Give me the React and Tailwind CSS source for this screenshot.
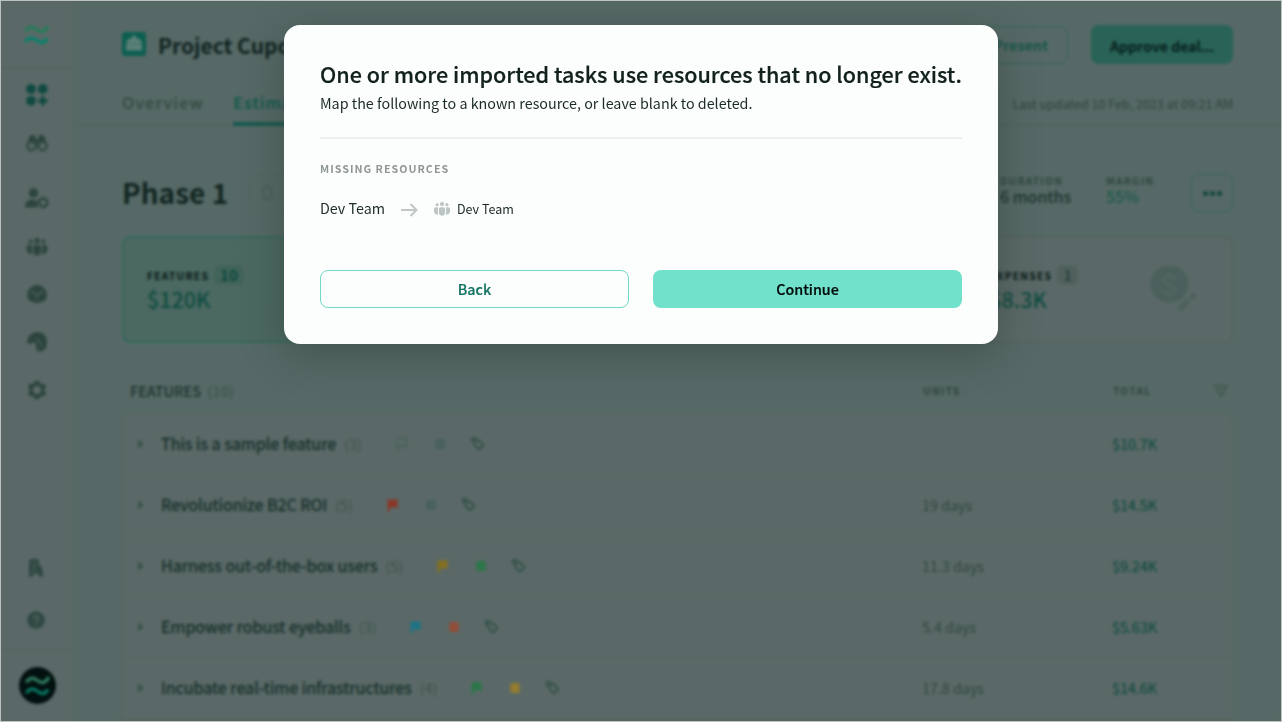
import React from "react";

const Wave = ({ className, top, bottom }) => (
  <svg viewBox="0 0 24 20" className={className} fill="none" strokeWidth="3.400" strokeLinecap="butt">
    <path d="M.8 6.200C4 1.400 8 1.200 12 4.500S20 7.600 23.400 1" stroke={top} />
    <path d="M.8 17C4 12.200 8 12 12 15.300S19.500 18.400 22.500 13.500" stroke={bottom} />
  </svg>
);

const GridIcon = () => (
  <svg viewBox="0 0 22 22" className="size-[22px]" fill="#104a43">
    <circle cx="5" cy="5" r="4.900" />
    <circle cx="16.800" cy="5" r="4.900" />
    <circle cx="5" cy="16.800" r="4.900" />
    <path d="M16.800 13.400v6.800M13.400 16.800h6.800" stroke="#104a43" strokeWidth="3.400" strokeLinecap="round" />
  </svg>
);

const Binoculars = () => (
  <svg viewBox="0 0 22 18" className="h-[18px] w-[22px]" fill="none" stroke="#2c443f" strokeWidth="2.200">
    <path d="M2.500 9L5 2h3l1.500 7zM19.500 9L17 2h-3l-1.500 7z" fill="#2c443f" />
    <circle cx="5.500" cy="12" r="4.300" fill="#566764" />
    <circle cx="16.500" cy="12" r="4.300" fill="#566764" />
    <path d="M8 6.500h6" strokeWidth="3" />
  </svg>
);

const UserTag = () => (
  <svg viewBox="0 0 24 20" className="h-[20px] w-[24px]" fill="#2c443f">
    <circle cx="8.500" cy="5" r="4.700" />
    <path d="M0 19.500c0-5 2.500-8 7-8 3 0 4.500.8 5.500 2v6z" />
    <circle cx="18.200" cy="14.600" r="4.200" fill="none" stroke="#2c443f" strokeWidth="2.600" />
  </svg>
);

const Team = ({ className, color }) => (
  <svg viewBox="0 0 16 14" className={className} fill={color}>
    <circle cx="8" cy="2.100" r="2.100" />
    <circle cx="3.100" cy="2.700" r="1.600" />
    <circle cx="12.900" cy="2.700" r="1.600" />
    <path d="M4.900 7.100c0-1.100.8-1.900 1.900-1.900h2.400c1.100 0 1.900.8 1.900 1.900V10c0 2-1.300 3.800-3.100 3.800S4.900 12 4.900 10z" />
    <path d="M3.900 5.200H1.800C.7 5.200 0 5.900 0 7v2.200c0 1.900 1.300 3.300 3.100 3.300.5 0 .9-.1 1.200-.3-.3-.7-.4-1.400-.4-2.200z" />
    <path d="M12.100 5.200h2.100c1.100 0 1.800.7 1.800 1.800v2.200c0 1.900-1.300 3.300-3.100 3.300-.5 0-.9-.1-1.200-.3.3-.7.4-1.400.4-2.200z" />
  </svg>
);

const Cube = () => (
  <svg viewBox="0 0 20 18" className="h-[18px] w-[20px]">
    <path d="M10 0a10 10 0 0 1 8.500 15Q14 18 10 18T1.500 15A10 10 0 0 1 10 0z" fill="#2c443f" />
    <path d="M4 6.500l6 3 6-3M10 9.500v5" stroke="#485c57" strokeWidth="1.800" fill="none" />
  </svg>
);

const Palette = () => (
  <svg viewBox="0 0 20 20" className="size-[20px]">
    <path d="M0 11C0 4 5 0 10.500 0S20 4 20 10s-3 9.500-7 9.500-4-3-4-6-1-3-3-2.500-3 1.500-6 0z" fill="#2c443f" />
    <path d="M9 7l5 4v4" stroke="#485c57" strokeWidth="1.500" fill="none" />
  </svg>
);

const Gear = () => (
  <svg viewBox="0 0 20 20" className="size-[20px]" fill="none" stroke="#2c443f" strokeLinejoin="round">
    <circle cx="10" cy="10" r="6" strokeWidth="3.600" />
    <path d="M10 .5v3M10 16.500v3M1.800 5.200l2.600 1.500M15.600 13.300l2.600 1.500M1.800 14.800l2.600-1.500M15.600 6.700l2.600-1.500" strokeWidth="4" />
  </svg>
);

const Book = () => (
  <svg viewBox="0 0 14 18" className="h-[18px] w-[14px]" fill="#2f4843">
    <path d="M0 2q0-2 2-2h6q2 0 2 2v4l3 2 1 8v2h-4v-3H4v3H0z" />
    <path d="M3.500 4.500h3M3.500 8.500h3M3.500 12h3" stroke="#4c605b" strokeWidth="1.300" />
  </svg>
);

const Help = () => (
  <svg viewBox="0 0 18 18" className="size-[18px]">
    <circle cx="9" cy="9" r="8.800" fill="#2f4843" />
    <path d="M6.500 7.500a2.500 2.500 0 1 1 3.500 2.300q-1 .5-1 1.700M9 13v1.500" fill="none" stroke="#526560" strokeWidth="1.700" />
  </svg>
);

const Flag = ({ color }) => (
  <svg viewBox="0 0 12 14" className="mt-px h-[14px] w-[12px]" fill={color || "none"} stroke={color || "#48605a"} strokeWidth={color ? 0 : 1.300}>
    <path d="M.5 13.500V1.500h11L9.800 5.500l1.700 4H2.800v4z" />
  </svg>
);

const Chip = ({ color }) => (
  <svg viewBox="0 0 12 12" className="mt-px size-[12px]">
    <rect x="1.500" y="1" width="9" height="10" rx="1.500" fill={color || "#46605b"} />
    <path d="M.8 3.500h10.400M.8 8.500h10.400" stroke={color || "#46605b"} strokeWidth="1.200" />
    {!color && <circle cx="6" cy="6" r="1.500" fill="#506560" />}
  </svg>
);

const Tags = () => (
  <svg viewBox="0 0 14 14" className="-ml-px mt-px size-[14px]" fill="none" stroke="#34504a" strokeWidth="1.900" strokeLinejoin="round">
    <path d="M1 5.500V1h4.500M3.500 3.500H8l4.500 4.500L8 12.500 3.500 8z" />
  </svg>
);

const nav = [
  { h: "h-[46px]", icon: <GridIcon /> },
  { h: "h-[49px]", icon: <Binoculars /> },
  { h: "h-[62px]", icon: <UserTag /> },
  { h: "h-[35px]", icon: <Team className="h-[18px] w-[22px]" color="#2c443f" /> },
  { h: "h-[59px]", icon: <Cube /> },
  { h: "h-[37px]", icon: <Palette /> },
  { h: "h-[59px]", icon: <Gear /> },
];

const rows = [
  { name: "This is a sample feature", count: 3, total: "$10.7K" },
  { name: "Revolutionize B2C ROI", count: 5, units: "19 days", total: "$14.5K", flag: "#8a3628" },
  { name: "Harness out-of-the-box users", count: 5, units: "11.3 days", total: "$9.24K", flag: "#84701f", chip: "#2c7648" },
  { name: "Empower robust eyeballs", count: 3, units: "5.4 days", total: "$5.63K", flag: "#1c7384", chip: "#924d38" },
  { name: "Incubate real-time infrastructures", count: 4, units: "17.8 days", total: "$14.6K", flag: "#2a7648", chip: "#937b30" },
];

function Sidebar() {
  return (
    <aside className="flex w-[73px] shrink-0 flex-col border-r-2 border-[#576662] bg-[#5a6967]">
      <div className="flex h-[67px] shrink-0 items-center justify-center border-b border-[#52625b] pt-[2px]">
        <Wave className="h-[20px] w-[25px]" top="#267d5a" bottom="#07826b" />
      </div>
      <div className="flex flex-col items-center pt-[4px]">
        {nav.map((n, i) => (
          <div key={i} className={`flex w-full items-center justify-center ${n.h}`}>
            {n.icon}
          </div>
        ))}
      </div>
      <div className="flex-1" />
      <div className="flex flex-col items-center gap-[34px] pr-[2px] pb-[20px]">
        <Book />
        <Help />
      </div>
      <div className="flex h-[72px] shrink-0 items-center justify-center border-t border-[#52625b] pl-px">
        <div className="flex size-[37px] items-center justify-center rounded-full bg-[#02110f]">
          <Wave className="h-[20px] w-[25px]" top="#2f7a60" bottom="#087562" />
        </div>
      </div>
    </aside>
  );
}

function Card({ label, count, value, active }) {
  return (
    <div className={`flex h-[107px] flex-1 items-center justify-between rounded-lg border-2 pr-[35px] pl-[23px] ${active ? "border-[#34695c] bg-[#4b6861]" : "border-[#55645f] bg-[#5a6967]"}`}>
      {label && (
        <div>
          <div className="flex h-[22px] items-start gap-[5px]">
            <span className="text-[10.300px] leading-[21px] font-bold tracking-[1.250px] text-[#051713]">{label}</span>
            <span className={`flex h-[20px] items-center rounded-[6px] px-[6px] text-[15px] font-bold ${active ? "bg-[#42635a] text-[#0b4a3e]" : "bg-[#50615d] text-[#2c443f]"}`}>{count}</span>
          </div>
          <div className="h-[27px] text-[21.500px] leading-[24px] font-medium text-[#0e4c40]">{value}</div>
        </div>
      )}
      {label === "EXPENSES" && (
        <svg viewBox="0 0 46 46" className="size-[46px]" fill="none">
          <circle cx="19.500" cy="18" r="19" fill="#4b605c" />
          <path d="M25 13c-1-3-11-4-12 1s12 4 12 10-11 5-13 0M19 7v4M19 26v4" stroke="#556763" strokeWidth="2" />
          <path d="M31 42l6-6M42 31l1.500-1.500" stroke="#4b605c" strokeWidth="5" strokeLinecap="round" />
        </svg>
      )}
    </div>
  );
}

function Page() {
  return (
    <div className="flex h-[720px] w-[1280px]">
      <Sidebar />
      <main className="flex flex-1 flex-col bg-[#566966]">
        <header className="h-[125px] shrink-0 border-b-2 border-[#52645f] px-[48px]">
          <div className="flex h-[87px] items-center">
            <svg viewBox="0 0 24 24" className="mr-3 mb-px size-[24px]">
              <rect width="24" height="24" rx="3" fill="#0b5e51" />
              <path d="M12 2.500l3.500 4.500H18l2 4v7.500H4V11l2-4h2.500z" fill="#5d8079" />
              <path d="M4 12h16" stroke="#3c7065" strokeWidth="1.200" />
            </svg>
            <span className="pt-[3px] text-[21px] font-bold text-[#10231f]">Project Cupcake</span>
            <div className="flex-1" />
            <div className="mr-[23px] flex h-[38px] w-[110px] items-center justify-end rounded-lg border border-[#34635a] pt-px pr-[19px] text-[14.300px] font-bold text-[#185648]">Present</div>
            <div className="flex h-[39px] w-[142px] items-center justify-center rounded-lg bg-[#296357] pt-[2px] text-[14.300px] font-bold tracking-[-0.150px] text-[#06201b]">Approve deal...</div>
          </div>
          <div className="flex h-[38px] items-stretch">
            <div className="mr-[31px] w-[80px] pt-[2px] text-[16px] leading-[24px] font-medium tracking-[1.200px] text-[#33493f]">Overview</div>
            <div className="w-[88px] border-b-[4px] border-[#17594d] pt-[2px] text-[16px] leading-[24px] font-bold tracking-[0.900px] text-[#17594d]">Estimate</div>
            <div className="flex-1 pt-[4px] text-right text-[12.550px] leading-[24px] text-[#30443f]">Last updated 10 Feb, 2023 at 09:21 AM</div>
          </div>
        </header>
        <section className="flex flex-1 flex-col overflow-hidden px-[48px] pt-[45px]">
          <div className="flex h-[45px] items-center">
            <span className="pb-[2px] text-[28px] font-bold text-[#122521]">Phase 1</span>
            <div className="ml-[22px] flex h-[38px] w-[80px] items-center gap-[14px] rounded-lg border border-[#52645f] pl-[11px]">
              <span className="h-[14px] w-[10px] rounded-[2px] border-2 border-[#4a5e59]" />
              <span className="h-[8px] w-[12px] bg-[#465a55]" />
            </div>
            <div className="flex-1" />
            <div className="w-[106px] pb-[8px]">
              <div className="text-[10.200px] leading-[15px] font-bold tracking-[1.300px] text-[#30463f]">DURATION</div>
              <div className="text-[15.900px] leading-[18px] font-medium text-[#1c332e]">6 months</div>
            </div>
            <div className="w-[85px] pb-[8px]">
              <div className="text-[10.200px] leading-[15px] font-bold tracking-[1.300px] text-[#30463f]">MARGIN</div>
              <div className="text-[15.900px] leading-[18px] font-medium text-[#1b594c]">55%</div>
            </div>
            <div className="flex h-[38px] w-[42px] items-center justify-center gap-[2px] rounded-lg border border-[#34635a]">
              {[0, 1, 2].map((i) => (
                <span key={i} className="size-[5px] rounded-full bg-[#12463d]" />
              ))}
            </div>
          </div>
          <div className="mt-[20px] flex gap-3">
            <Card label="FEATURES" count="10" value="$120K" active />
            <Card />
            <Card />
            <Card label="EXPENSES" count="1" value="$8.3K" />
          </div>
          <div className="flex h-[70px] shrink-0 items-center pt-[26px] pl-2">
            <div className="w-[793px] text-[14.400px] font-medium text-[#1d332e]">
              FEATURES <span className="pl-[3px] text-[#3c514c]">(10)</span>
            </div>
            <div className="w-[190px] text-[10.200px] font-bold tracking-[1.300px] text-[#30463f]">UNITS</div>
            <div className="flex-1 text-[10.200px] font-bold tracking-[1.300px] text-[#30463f]">TOTAL</div>
            <svg viewBox="0 0 18 14" className="mr-[3px] h-[14px] w-[18px]" fill="none" stroke="#43584f" strokeWidth="1.700">
              <path d="M1 1.500h16M4 4.500h10L9 12z" />
            </svg>
          </div>
          <div className="-mx-px flex flex-col overflow-hidden rounded-t-lg border-2 border-[#576661] bg-[#5a6967]">
            {rows.map((r) => (
              <div key={r.name} className="flex h-[61px] shrink-0 items-center border-b-2 border-[#566660] pb-[2px] pl-[15px]">
                <svg viewBox="0 0 6 10" className="mt-px mr-[17px] h-[10px] w-[6px]" fill="#3a534d">
                  <path d="M0 0l6 5-6 5z" />
                </svg>
                <div className="flex w-[761px] items-center">
                  <span className="text-[16.100px] text-[#142e29] [-webkit-text-stroke:0.300px_#142e29]">{r.name}</span>
                  <span className="ml-[8px] text-[14.300px] text-[#3c514c]">({r.count})</span>
                  <div className="ml-[34px] flex items-center gap-[26px]">
                    <Flag color={r.flag} />
                    <Chip color={r.chip} />
                    <Tags />
                  </div>
                </div>
                <span className="w-[190px] text-[14.300px] text-[#30463f]">{r.units}</span>
                <span className="text-[14.300px] text-[#0f4b40] [-webkit-text-stroke:0.200px_#0f4b40]">{r.total}</span>
              </div>
            ))}
          </div>
        </section>
      </main>
    </div>
  );
}

function Modal() {
  return (
    <div role="dialog" className="flex h-[319px] w-[714px] flex-col rounded-[16px] bg-[#fcfefd] px-[36px] shadow-[0_10px_40px_rgba(40,50,44,0.400)]">
      <h1 className="mt-[33px] text-[21.570px] leading-[32px] font-medium whitespace-nowrap text-[#12211e] [-webkit-text-stroke:0.200px_#12211e]">One or more imported tasks use resources that no longer exist.</h1>
      <p className="mt-[2px] text-[14.320px] leading-[22px] text-[#1c2a27]">Map the following to a known resource, or leave blank to deleted.</p>
      <hr className="mt-[23px] border-t-2 border-[#eceeee]" />
      <div className="mt-[22px] text-[10.740px] leading-[16px] font-bold tracking-[1px] text-[#8f9795]">MISSING RESOURCES</div>
      <div className="mt-[20px] flex h-[24px] items-center">
        <span className="w-[81px] pb-[2px] text-[14.320px] leading-[22px] text-[#1c2a27]">Dev Team</span>
        <svg viewBox="0 0 17 14" className="mt-[2px] mr-[16px] h-[14px] w-[17px]" fill="none" stroke="#c0c7c5" strokeWidth="2">
          <path d="M0 7h15.500M9.500 1l6 6-6 6" />
        </svg>
        <Team className="mr-[7px] h-[14px] w-[16px]" color="#bcc5c3" />
        <span className="text-[12.530px] leading-[24px] text-[#1c2a27]">Dev Team</span>
      </div>
      <div className="mt-[49.400px] flex gap-6">
        <button className="h-[38px] w-[309px] rounded-lg border border-[#71d9c5] pb-[2px] text-[14.320px] font-medium text-[#137362] [-webkit-text-stroke:0.200px_#137362]">Back</button>
        <button className="h-[38px] w-[309px] rounded-lg bg-[#71e1cb] pb-[2px] text-[14.320px] font-medium text-[#030c0a] [-webkit-text-stroke:0.200px_#030c0a]">Continue</button>
      </div>
    </div>
  );
}

export default function App() {
  return (
    <div className="relative h-[722px] w-[1282px] overflow-hidden border border-[#bcc3c1] font-['Noto_Sans_CJK_SC','Noto_Sans',sans-serif]">
      <Page />
      <div className="absolute inset-0 flex items-start justify-center pt-6 backdrop-blur-[1.850px]">
        <Modal />
      </div>
    </div>
  );
}
